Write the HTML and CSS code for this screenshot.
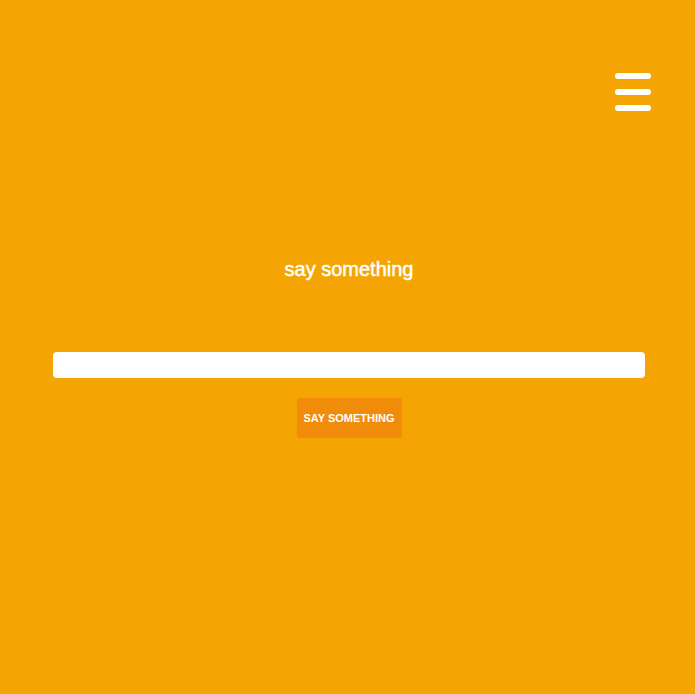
FILE: index.html
```html
<!DOCTYPE html>
<html>
<head>
<meta charset="utf-8">
<link rel="stylesheet" href="styles.css">
</head>
<body>
<header class="top">
  <button class="menu" aria-label="menu">
    <span class="bar"></span><span class="bar"></span><span class="bar"></span>
  </button>
</header>
<main class="content">
  <h1 class="title">say something</h1>
  <input class="field" type="text">
  <button class="send">SAY SOMETHING</button>
</main>
</body>
</html>
```

FILE: styles.css
```css
html, body {
  margin: 0;
  padding: 0;
  background: #f4a503;
  height: 100%;
}
body {
  font-family: "Liberation Sans", Arial, sans-serif;
}
.top {
  display: flex;
  justify-content: flex-end;
  padding: 73px 44px 0 0;
}
.menu {
  display: flex;
  flex-direction: column;
  gap: 10px;
  padding: 0;
  margin: 0;
  border: 0;
  background: none;
  width: 36px;
}
.bar {
  display: block;
  height: 6px;
  width: 36px;
  border-radius: 3px;
  background: #fff;
}
.content {
  display: flex;
  flex-direction: column;
  align-items: center;
  padding: 0 50px 0 53px;
}
.title {
  margin: 146px 0 0;
  font-size: 20px;
  font-weight: normal;
  color: #fff;
  line-height: 24px;
  -webkit-text-stroke: 0.5px #fff;
}
.field {
  margin-top: 71px;
  box-sizing: border-box;
  width: 592px;
  height: 26px;
  border: 0;
  border-radius: 4px;
  background: #fff;
  outline: none;
}
.send {
  margin-top: 20px;
  width: 105px;
  height: 40px;
  border: 0;
  border-radius: 3px;
  background: #f08c0a;
  color: #fff;
  font-family: "Liberation Sans", Arial, sans-serif;
  font-size: 11px;
  font-weight: bold;
  padding: 0;
}
```
